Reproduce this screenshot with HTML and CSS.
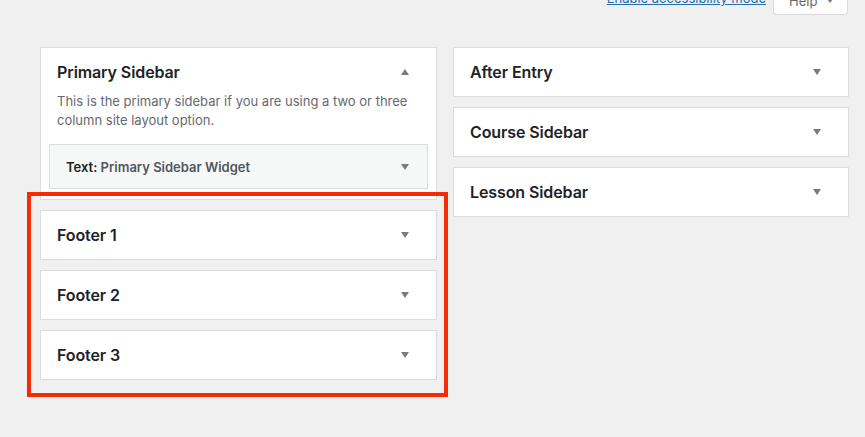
FILE: index.html
```html
<!DOCTYPE html>
<html>
<head>
<meta charset="utf-8">
<link rel="stylesheet" href="styles.css">
</head>
<body>
<div class="topbar">
  <a class="a11y" href="#">Enable accessibility mode</a>
  <button class="help">Help <span class="tri down small"></span></button>
</div>
<div class="columns">
  <div class="col left">
    <div class="box open">
      <div class="head"><h3>Primary Sidebar</h3><span class="tri up"></span></div>
      <p class="desc">This is the primary sidebar if you are using a two or three column site layout option.</p>
      <div class="widget">
        <div class="wtitle"><b>Text</b>: <span>Primary Sidebar Widget</span></div>
        <span class="tri down"></span>
      </div>
    </div>
    <div class="footers">
      <div class="box"><div class="head"><h3>Footer 1</h3><span class="tri down"></span></div></div>
      <div class="box"><div class="head"><h3>Footer 2</h3><span class="tri down"></span></div></div>
      <div class="box"><div class="head"><h3>Footer 3</h3><span class="tri down"></span></div></div>
      <div class="highlight"></div>
    </div>
  </div>
  <div class="col right">
    <div class="box"><div class="head"><h3>After Entry</h3><span class="tri down"></span></div></div>
    <div class="box"><div class="head"><h3>Course Sidebar</h3><span class="tri down"></span></div></div>
    <div class="box"><div class="head"><h3>Lesson Sidebar</h3><span class="tri down"></span></div></div>
  </div>
</div>
</body>
</html>
```
FILE: styles.css
```css
* { box-sizing: border-box; }
html, body { margin: 0; background: #f0f0f1; }
body {
  font-family: Inter, "Noto Sans", "Liberation Sans", sans-serif;
  color: #1d2327;
  width: 865px;
  height: 437px;
  overflow: hidden;
}
.topbar {
  display: flex;
  justify-content: flex-end;
  align-items: flex-end;
  gap: 7px;
  padding-right: 17px;
  height: 14px;
}
.a11y {
  font-size: 13px;
  line-height: 16px;
  color: #2271b1;
  text-decoration: underline;
  margin-bottom: 8px;
}
.help {
  height: 28px;
  width: 75px;
  background: #fff;
  border: 1px solid #dcdcde;
  border-top: none;
  border-radius: 0 0 4px 4px;
  font-family: inherit;
  font-size: 13px;
  color: #646970;
  display: flex;
  align-items: center;
  justify-content: flex-start;
  gap: 10px;
  padding: 0 0 0 15px;
  margin-bottom: -1px;
}
.columns {
  display: flex;
  gap: 16px;
  padding: 33px 0 0 40px;
}
.col { display: flex; flex-direction: column; gap: 10px; }
.left { width: 397px; }
.right { width: 396px; }
.box {
  background: #fff;
  border: 1px solid #dcdcde;
}
.head {
  height: 48px;
  display: flex;
  align-items: center;
  justify-content: space-between;
  padding: 0 27px 0 16px;
}
.head h3 {
  margin: 0;
  font-size: 16px;
  font-weight: 600;
  letter-spacing: -0.1px;
}
.tri {
  width: 0; height: 0;
  border-left: 4.5px solid transparent;
  border-right: 4.5px solid transparent;
}
.tri.down { border-top: 6px solid #787c82; }
.tri.up { border-bottom: 6px solid #787c82; }
.tri.small { border-left-width: 3.5px; border-right-width: 3.5px; border-top-width: 4px; }
.desc {
  margin: -4px 16px 0 16px;
  font-size: 13px;
  line-height: 19px;
  color: #646970;
}
.widget {
  margin: 14px 8px 10px 8px;
  height: 45px;
  background: #f6f7f7;
  border: 1px solid #dcdcde;
  display: flex;
  align-items: center;
  justify-content: space-between;
  padding: 0 18px 0 16px;
}
.wtitle {
  font-size: 13px;
  font-weight: 600;
  color: #1d2327;
}
.wtitle span { color: #50575e; }
.wtitle b { font-weight: 600; }
.footers {
  position: relative;
  display: flex;
  flex-direction: column;
  gap: 10px;
}
.highlight {
  position: absolute;
  left: -13px;
  right: -11px;
  top: -18px;
  bottom: -17px;
  border: 4px solid #f52b05;
  pointer-events: none;
}
```
